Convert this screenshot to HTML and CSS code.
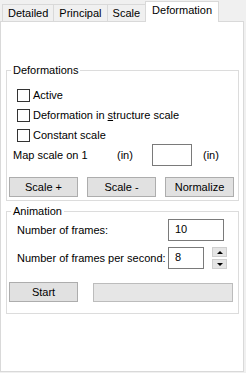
FILE: index.html
```html
<!DOCTYPE html>
<html lang="en">
<head>
    <meta charset="UTF-8">
    <title>Deformation</title>
    <link rel="stylesheet" href="styles.css">
</head>
<body>
    <div class="window">
        <div class="tabs">
            <div class="tab">Detailed</div>
            <div class="tab">Principal</div>
            <div class="tab">Scale</div>
            <div class="tab active">Deformation</div>
        </div>

        <div class="panel">
            <fieldset class="group deform">
                <legend>Deformations</legend>
                <div class="checks">
                    <label class="check"><span class="box"></span><span>Active</span></label>
                    <label class="check"><span class="box"></span><span>Deformation in <u>s</u>tructure scale</span></label>
                    <label class="check"><span class="box"></span><span>Constant scale</span></label>
                </div>
                <div class="map-row">
                    <span class="map-label">Map scale on 1</span>
                    <span class="unit">(in)</span>
                    <span class="textbox map-box"></span>
                    <span class="unit unit-last">(in)</span>
                </div>
                <div class="btn-row">
                    <button class="btn">Scale +</button>
                    <button class="btn">Scale -</button>
                    <button class="btn">Normalize</button>
                </div>
            </fieldset>

            <fieldset class="group anim">
                <legend>Animation</legend>
                <div class="num-row">
                    <span class="num-label">Number of frames:</span>
                    <span class="textbox frames">10</span>
                </div>
                <div class="num-row second">
                    <span class="num-label">Number of frames per second:</span>
                    <span class="textbox fps">8</span>
                    <span class="spin">
                        <span class="spin-btn"><span class="arrow up"></span></span>
                        <span class="spin-btn"><span class="arrow down"></span></span>
                    </span>
                </div>
                <div class="start-row">
                    <button class="btn">Start</button>
                    <div class="progress"></div>
                </div>
            </fieldset>
        </div>
    </div>
</body>
</html>
```

FILE: styles.css
```css
body {
    margin: 0;
    background-color: #f0f0f0;
    font-family: "Liberation Sans", Arial, sans-serif;
    font-size: 11px;
    line-height: 15px;
    color: #000;
}
.window {
    width: 246px;
    height: 373px;
    display: flex;
    flex-direction: column;
}
.tabs {
    display: flex;
    align-items: flex-end;
    height: 21px;
    padding-left: 2px;
}
.tab {
    height: 16px;
    line-height: 16px;
    padding: 0 5px;
    border: 1px solid #d9d9d9;
    border-bottom: none;
    margin-right: -1px;
    background-color: #f0f0f0;
}
.tab.active {
    position: relative;
    z-index: 1;
    height: 20px;
    line-height: 17px;
    padding: 0 6px;
    margin-bottom: -1px;
    background-color: #fff;
}
.panel {
    flex: 1;
    margin: 0 2px 1px 0;
    background-color: #fff;
    border: 1px solid #d9d9d9;
}
.group {
    margin: 0 4px 0 5px;
    padding: 0;
    border: 1px solid #dcdcdc;
}
.group legend {
    margin-left: 4px;
    padding: 0 2px;
    line-height: 16px;
}
.deform {
    margin-top: 40px;
    padding-bottom: 3px;
}
.anim {
    margin-top: 2px;
    padding-bottom: 11px;
}
.checks {
    padding: 7px 0 0 10px;
}
.check {
    display: flex;
    align-items: center;
    height: 20px;
}
.box {
    width: 11px;
    height: 11px;
    border: 1px solid #333;
    background-color: #fff;
    margin-right: 3px;
}
.map-row {
    display: flex;
    align-items: center;
    height: 22px;
    margin-top: -1px;
    padding-left: 6px;
}
.map-label {
    width: 104px;
}
.unit {
    width: 35px;
}
.unit-last {
    margin-left: 11px;
}
.textbox {
    box-sizing: border-box;
    height: 22px;
    border: 1px solid #7a7a7a;
    background-color: #fff;
    padding-left: 6px;
    line-height: 19px;
}
.map-box {
    width: 40px;
}
.btn-row {
    display: flex;
    gap: 9px;
    margin-top: 11px;
    padding-left: 2px;
}
.btn {
    width: 69px;
    height: 20px;
    padding: 0;
    font: inherit;
    color: #000;
    background-color: #e1e1e1;
    border: 1px solid #adadad;
}
.num-row {
    display: flex;
    align-items: center;
    padding-left: 10px;
}
.num-row.second {
    margin-top: 6px;
}
.num-label {
    width: 151px;
}
.frames {
    width: 56px;
}
.fps {
    width: 36px;
}
.spin {
    display: flex;
    flex-direction: column;
    gap: 2px;
    margin-left: 8px;
}
.spin-btn {
    display: flex;
    align-items: center;
    justify-content: center;
    width: 13px;
    height: 8px;
    background-color: #e5e5e5;
    border: 1px solid #cfcfcf;
}
.arrow {
    width: 0;
    height: 0;
    border-left: 3px solid transparent;
    border-right: 3px solid transparent;
}
.arrow.up {
    border-bottom: 3px solid #000;
}
.arrow.down {
    border-top: 3px solid #000;
}
.start-row {
    display: flex;
    align-items: flex-end;
    gap: 15px;
    margin-top: 13px;
    padding-left: 2px;
}
.progress {
    width: 138px;
    height: 17px;
    background-color: #e6e6e6;
    border: 1px solid #bcbcbc;
}
```
